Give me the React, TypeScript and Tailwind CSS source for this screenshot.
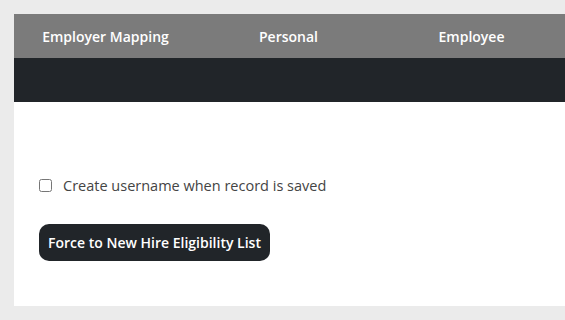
export default function App() {
  const tabs = ['Employer Mapping', 'Personal', 'Employee']
  return (
    <div className="min-h-screen overflow-hidden bg-[#ebebeb] pl-[14px] pt-[14px] font-['Open_Sans',sans-serif]">
      <div className="w-[600px] bg-white pb-[45px]">
        <div className="flex h-[44px] items-center bg-[#7b7b7b]">
          {tabs.map((t) => (
            <div key={t} className="w-[183px] shrink-0 text-center text-[14px] font-semibold text-white">
              {t}
            </div>
          ))}
        </div>
        <div className="h-[44px] bg-[#212529]" />
        <div className="px-[25px] pt-[73px]">
          <label className="flex items-center gap-[11px] text-[14.5px] text-[#444]">
            <input type="checkbox" className="h-[13px] w-[13px] rounded-[3px]" />
            Create username when record is saved
          </label>
          <button className="mt-[27px] h-[37px] rounded-[10px] bg-[#212529] px-[9px] text-[14px] font-semibold text-white">
            Force to New Hire Eligibility List
          </button>
        </div>
      </div>
    </div>
  )
}
